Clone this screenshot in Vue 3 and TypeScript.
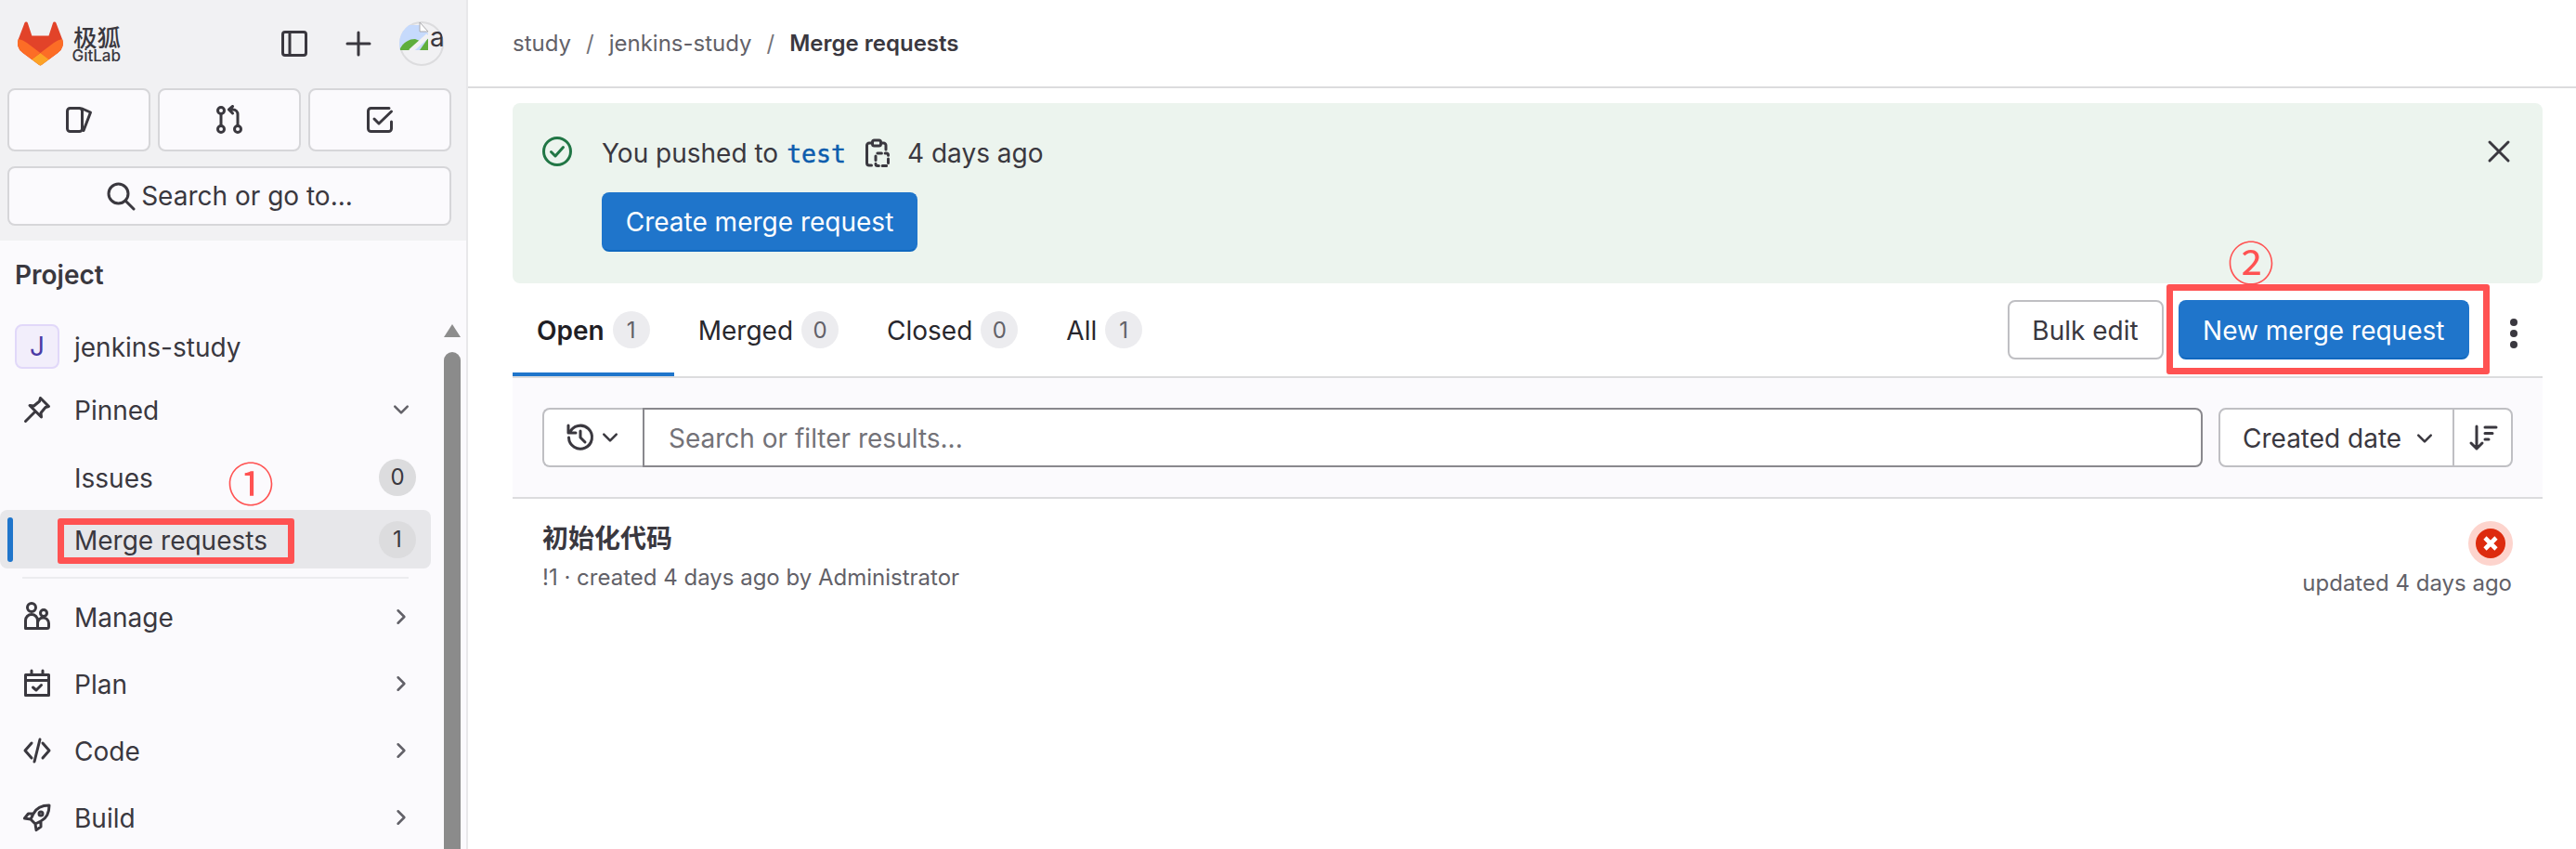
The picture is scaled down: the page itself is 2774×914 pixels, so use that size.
<script setup lang="ts">
interface NavItem { label: string; d: string }
const navItems: NavItem[] = [
  { label: 'Manage', d: 'M1.75 14.25V10a3.25 3.25 0 0 1 6.5 0v4.25zM8.25 14.25h5a1 1 0 0 0 1-1V11.5a3 3 0 0 0-6 0M7.25 3a2.25 2.25 0 1 1-4.5 0 2.25 2.25 0 0 1 4.5 0zM13.25 6a1.75 1.75 0 1 1-3.5 0 1.75 1.75 0 0 1 3.5 0z' },
  { label: 'Plan', d: 'M1.75 3.25h12.5v11H1.75zM1.75 6.25h12.5M5 1v2.25M11 1v2.25M5.75 10l1.75 1.5 2.75-2.75' },
  { label: 'Code', d: 'M5 4 1.5 8 5 12M11 4l3.5 4-3.5 4M9.5 2l-3 12' },
  { label: 'Build', d: 'M14.5 1.5c-4 0-7 1.5-8.5 4.5L4.5 9 7 11.5l3-1.5c3-1.5 4.5-4.5 4.5-8.5zM6 6H3.2L1.2 8.5l3.3.5M10 10v3l-2.5 1.8-.5-3.3M11 6a1 1 0 1 1-2 0 1 1 0 0 1 2 0z' },
]
const tabs = [
  { label: 'Open', count: 1, active: true },
  { label: 'Merged', count: 0, active: false },
  { label: 'Closed', count: 0, active: false },
  { label: 'All', count: 1, active: false },
]
</script>

<template>
  <div class="page">
    <aside class="sidebar">
      <div class="super">
        <div class="topbar">
          <svg class="logo" viewBox="0 0 25 24" width="49" height="48">
            <path d="m24.507 9.5-.034-.09L21.082.562a.896.896 0 0 0-1.694.091l-2.29 7.01H7.825L5.535.653a.898.898 0 0 0-1.694-.09L.451 9.411.416 9.5a6.297 6.297 0 0 0 2.09 7.278l.012.01.03.022 5.16 3.867 2.56 1.935 1.554 1.176a1.051 1.051 0 0 0 1.268 0l1.555-1.176 2.56-1.935 5.197-3.89.014-.01A6.297 6.297 0 0 0 24.507 9.5Z" fill="#E24329"/>
            <path d="m24.507 9.5-.034-.09a11.44 11.44 0 0 0-4.56 2.051l-7.447 5.632 4.742 3.584 5.197-3.89.014-.01A6.297 6.297 0 0 0 24.507 9.5Z" fill="#FC6D26"/>
            <path d="m7.707 20.677 2.56 1.935 1.555 1.176a1.051 1.051 0 0 0 1.268 0l1.555-1.176 2.56-1.935-4.743-3.584-4.755 3.584Z" fill="#FCA326"/>
            <path d="M5.01 11.461a11.43 11.43 0 0 0-4.56-2.05L.416 9.5a6.297 6.297 0 0 0 2.09 7.278l.012.01.03.022 5.16 3.867 4.745-3.584-7.444-5.632Z" fill="#FC6D26"/>
          </svg>
          <div class="brand">
            <span class="brand-cn">极狐</span>
            <span class="brand-en">GitLab</span>
          </div>
          <svg class="ico panel-ico" viewBox="0 0 16 16"><rect x="1.75" y="1.75" width="12.5" height="12.5" rx="1.25"/><path d="M5.5 1.75v12.5"/></svg>
          <svg class="ico plus-ico" viewBox="0 0 16 16"><path d="M8 2v12M2 8h12"/></svg>
          <div class="avatar">
            <svg class="broken" viewBox="0 0 32 32" width="32" height="32">
              <path d="M0 31V4h22l9 9v18z" fill="#c6dafc"/>
              <path d="M0 31c4-9 11-12 17-12l5 2-9 10z" fill="#5fae3c"/>
              <path d="M31 18v13h-9z" fill="#5fae3c"/>
              <path d="M12 32 31 15" stroke="#f1f1f3" stroke-width="5" fill="none"/>
              <path d="M22 1v10h9L22 1z" fill="#fff" stroke="#a9a9ad" stroke-width="1"/>
            </svg>
            <span class="avatar-alt">a</span>
          </div>
        </div>
        <div class="quick">
          <button class="quick-btn"><svg class="ico" viewBox="0 0 16 16"><rect x="1.75" y="1.75" width="8" height="12.5" rx="1.5"/><path d="M9.75 2l4.5 2-3.75 9.75"/></svg></button>
          <button class="quick-btn"><svg class="ico" viewBox="0 0 16 16"><circle cx="3.5" cy="3" r="1.75"/><circle cx="3.5" cy="13" r="1.75"/><circle cx="12.5" cy="13" r="1.75"/><path d="M3.5 4.75v6.5M12.5 11.25V5a2.5 2.5 0 0 0-2.5-2.5H8M9.75.75 7.75 2.5l2 2"/></svg></button>
          <button class="quick-btn"><svg class="ico" viewBox="0 0 16 16"><path d="M13 1.75H3.25a1.5 1.5 0 0 0-1.5 1.5v9.5a1.5 1.5 0 0 0 1.5 1.5h9.5a1.5 1.5 0 0 0 1.5-1.5V9M5 7.5 7.5 10l6.75-6.5"/></svg></button>
        </div>
        <button class="search-btn">
          <svg class="ico" viewBox="0 0 16 16"><circle cx="6.75" cy="6.75" r="5.25"/><path d="M10.5 10.5 15 15"/></svg>
          <span>Search or go to...</span>
        </button>
      </div>

      <div class="ctx-title">Project</div>

      <div class="nav-wrap">
        <nav class="nav">
          <div class="nav-row project-row">
            <span class="proj-avatar">J</span>
            <span class="label">jenkins-study</span>
          </div>
          <div class="nav-row pinned-row">
            <svg class="ico" viewBox="0 0 16 16"><path d="M9.75 1.75l4.5 4.5-1.75.5-2.5 3 .25 2.25L4 5.75l2.25.25 3-2.5zM6.5 9.5l-4.75 4.75"/></svg>
            <span class="label">Pinned</span>
            <svg class="chev" viewBox="0 0 16 16"><path d="M3.5 5.75 8 10.25l4.5-4.5"/></svg>
          </div>
          <div class="nav-row sub-row">
            <span class="label sub-label">Issues</span>
            <span class="nav-badge">0</span>
          </div>
          <div class="nav-row sub-row active-row">
            <span class="active-bar"></span>
            <span class="label sub-label">Merge requests</span>
            <span class="nav-badge">1</span>
          </div>
          <div class="sep"></div>
          <div v-for="item in navItems" :key="item.label" class="nav-row group-row">
            <svg class="ico" viewBox="0 0 16 16"><path :d="item.d"/></svg>
            <span class="label">{{ item.label }}</span>
            <svg class="chev" viewBox="0 0 16 16"><path d="M5.75 3.5 10.25 8l-4.5 4.5"/></svg>
          </div>
        </nav>
        <div class="scrollbar">
          <span class="scroll-up"></span>
          <span class="scroll-thumb"></span>
        </div>
      </div>
    </aside>

    <main class="main">
      <header class="crumbs">
        <span class="crumb">study</span><span class="slash">/</span>
        <span class="crumb">jenkins-study</span><span class="slash">/</span>
        <span class="crumb current">Merge requests</span>
      </header>

      <section class="alert">
        <svg class="ico alert-check" viewBox="0 0 16 16"><circle cx="8" cy="8" r="7.25"/><path d="M4.75 8.25 7 10.5l4.25-4.75"/></svg>
        <div class="alert-body">
          <div class="alert-text">
            <span>You pushed to</span>
            <code class="branch">test</code>
            <svg class="ico clip" viewBox="0 0 16 16"><path d="M5.5 2.5H4a1.25 1.25 0 0 0-1.25 1.25v9.5A1.25 1.25 0 0 0 4 14.5h1.25M10.5 2.5h1.25A1.25 1.25 0 0 1 13 3.75V6"/><rect x="5.75" y="1" width="4.5" height="3" rx="1"/><rect x="7.5" y="8" width="6.75" height="6.75" rx="1" stroke-dasharray="2.2 1.9"/></svg>
            <span>4 days ago</span>
          </div>
          <button class="btn primary create">Create merge request</button>
        </div>
        <svg class="ico close" viewBox="0 0 16 16"><path d="M3 3l10 10M13 3 3 13"/></svg>
      </section>

      <div class="tabs-row">
        <div class="tabs">
          <div v-for="t in tabs" :key="t.label" class="tab" :class="{ on: t.active }">
            <span class="tab-text">{{ t.label }}</span>
            <span class="tab-badge">{{ t.count }}</span>
          </div>
        </div>
        <div class="actions">
          <button class="btn outline">Bulk edit</button>
          <button class="btn primary newmr">New merge request</button>
          <span class="kebab"><i></i><i></i><i></i></span>
        </div>
      </div>

      <div class="filter">
        <button class="history">
          <svg class="ico" viewBox="0 0 16 16"><path d="M2.2 5.5A6.25 6.25 0 1 1 1.75 8M1.5 1.5v4h4M8 4.5V8l2.5 2.5"/></svg>
          <svg class="chev small" viewBox="0 0 16 16"><path d="M3.5 5.75 8 10.25l4.5-4.5"/></svg>
        </button>
        <div class="filter-input">Search or filter results...</div>
        <div class="sorter">
          <div class="sort-field">
            <span>Created date</span>
            <svg class="chev" viewBox="0 0 16 16"><path d="M3.5 5.75 8 10.25l4.5-4.5"/></svg>
          </div>
          <div class="sort-dir">
            <svg class="ico" viewBox="0 0 16 16"><path d="M4.5 2v12M1.5 11l3 3 3-3M9 2.5h6M9 5.75h4M9 9h2"/></svg>
          </div>
        </div>
      </div>

      <div class="mr">
        <div class="mr-left">
          <div class="mr-title">初始化代码</div>
          <div class="mr-meta">!1 · created 4 days ago by Administrator</div>
        </div>
        <div class="mr-right">
          <span class="status">
            <svg viewBox="0 0 32 32" width="32" height="32"><circle cx="16" cy="16" r="16" fill="#dd2b0e"/><path d="M10 10l12 12M22 10 10 22" stroke="#fff" stroke-width="4.6" fill="none"/></svg>
          </span>
          <div class="mr-updated">updated 4 days ago</div>
        </div>
      </div>
    </main>

    <span class="mark-box box-one"></span>
    <span class="mark-box box-two"></span>
    <span class="mark-num num-one">①</span>
    <span class="mark-num num-two">②</span>
  </div>
</template>

<style>
html, body { margin: 0; background: #fff; overflow: hidden; }
</style>

<style scoped>
.page {
  position: relative;
  display: flex;
  width: 2774px;
  height: 914px;
  overflow: hidden;
  background: #fff;
  font-family: Inter, "Noto Sans CJK SC", sans-serif;
  font-size: 28px;
  color: #3a383f;
}
button { font: inherit; color: inherit; cursor: pointer; }
.ico { width: 32px; height: 32px; flex: none; fill: none; stroke: #3a383f; stroke-width: 1.5; stroke-linecap: round; stroke-linejoin: round; }
.chev { width: 24px; height: 24px; flex: none; fill: none; stroke: #626168; stroke-width: 1.7; stroke-linecap: round; stroke-linejoin: round; }

.sidebar { width: 502px; flex: none; background: #fbfafd; border-right: 2px solid #e8e8ea; display: flex; flex-direction: column; overflow: hidden; }
.super { height: 259px; background: #f1f1f3; padding: 23px 16px 0 8px; box-sizing: border-box; }
.topbar { display: flex; align-items: center; height: 48px; padding-left: 11px; }
.brand { display: flex; flex-direction: column; align-items: flex-end; width: 52px; height: 44px; margin-left: 10px; color: #3a383f; }
.brand-cn { font-family: "Noto Sans CJK SC", sans-serif; font-size: 25.5px; line-height: 27px; font-weight: 500; height: 27px; }
.brand-en { font-size: 17px; line-height: 17px; font-weight: 500; height: 17px; }
.panel-ico { margin-left: 171px; }
.plus-ico { margin-left: 37px; }
.avatar { position: relative; width: 48px; height: 48px; margin-left: 28px; border-radius: 50%; box-shadow: inset 0 0 0 2px #dcdcde; overflow: hidden; flex: none; }
.broken { position: absolute; left: 0; top: 0; }
.avatar-alt { position: absolute; left: 33px; top: -1px; font-size: 28px; line-height: 36px; color: #3a383f; }
.quick { display: grid; grid-template-columns: repeat(3, 154px); gap: 8px; margin-top: 24px; }
.quick-btn { height: 68px; background: #fbfafd; border: 2px solid #d6d6d9; border-radius: 8px; display: flex; align-items: center; justify-content: center; padding: 0; }
.search-btn { display: flex; align-items: center; justify-content: center; gap: 6px; width: 478px; height: 64px; margin-top: 16px; background: #fbfafd; border: 2px solid #d6d6d9; border-radius: 8px; padding: 0; }

.ctx-title { font-weight: 600; line-height: 34px; padding: 20px 0 0 16px; height: 70px; box-sizing: border-box; color: #3a383f; }
.nav-wrap { display: flex; flex: 1; min-height: 0; padding-top: 20px; }
.nav { width: 464px; flex: none; display: flex; flex-direction: column; }
.nav-row { position: relative; display: flex; align-items: center; flex: none; height: 63px; padding: 0 20px 0 24px; box-sizing: border-box; }
.label { margin-left: 24px; padding-top: 2px; }
.project-row { padding-left: 16px; height: 48px; }
.project-row .label { margin-left: 16px; }
.proj-avatar { width: 48px; height: 48px; box-sizing: border-box; border: 2px solid #e1d8f9; border-radius: 8px; background: #f2eefb; color: #4b3aa5; display: flex; align-items: center; justify-content: center; }
.pinned-row { margin-top: 12px; }
.pinned-row .chev, .group-row .chev { margin-left: auto; }
.sub-row { padding-left: 80px; padding-right: 16px; }
.sub-label { margin-left: 0; }
.sub-row:nth-child(3) { margin-top: 10px; }
.active-row { margin-top: 4px; background: #e7e7ea; border-radius: 8px; }
.active-bar { position: absolute; left: 8px; top: 8px; width: 6px; height: 48px; border-radius: 3px; background: #1f75cb; }
.nav-badge { margin-left: auto; width: 40px; height: 40px; border-radius: 50%; background: #dcdcde; display: flex; align-items: center; justify-content: center; font-size: 24px; color: #3a383f; }
.sep { height: 2px; margin: 9px 24px 9px; background: #ececef; flex: none; }
.group-row { margin-bottom: 9px; }
.scrollbar { width: 18px; margin-left: 14px; display: flex; flex-direction: column; align-items: center; flex: none; }
.scroll-up { width: 0; height: 0; border-left: 9px solid transparent; border-right: 9px solid transparent; border-bottom: 14px solid #8d8d8d; }
.scroll-thumb { width: 18px; flex: 1; margin-top: 16px; background: #8b8b8b; border-radius: 9px 9px 0 0; }

.main { flex: 1; min-width: 0; padding: 0 36px 0 48px; display: flex; flex-direction: column; }
.crumbs { height: 95px; margin: 0 -36px 0 -48px; padding: 0 0 0 48px; border-bottom: 2px solid #dcdcde; box-sizing: border-box; display: flex; align-items: center; font-size: 24px; color: #626168; flex: none; }
.slash { margin: 0 16px; color: #737278; }
.current { font-weight: 600; color: #3a383f; }

.alert { position: relative; margin-top: 16px; height: 194px; box-sizing: border-box; background: #ecf4ee; border-radius: 8px; padding: 34px 0 0 32px; display: flex; flex: none; }
.alert-check { stroke: #217645; margin-top: 2px; }
.alert-body { margin-left: 32px; display: flex; flex-direction: column; align-items: flex-start; }
.alert-text { display: flex; align-items: center; height: 40px; }
.branch { font-family: "DejaVu Sans Mono", monospace; font-size: 26.5px; color: #0b5cad; margin-left: 9px; -webkit-text-stroke: 0.5px #0b5cad; }
.clip { margin: 0 17px 0 17px; }
.close { position: absolute; right: 31px; top: 36px; }
.btn { height: 64px; border-radius: 8px; padding: 0; box-sizing: border-box; display: flex; align-items: center; justify-content: center; }
.primary { background: #1f75cb; color: #fff; border: 2px solid #1f75cb; border-bottom-color: #1068bf; }
.create { width: 340px; margin-top: 22px; }

.tabs-row { display: flex; align-items: flex-start; height: 102px; border-bottom: 2px solid #dcdcde; box-sizing: border-box; flex: none; }
.tabs { display: flex; height: 100px; }
.tab { display: flex; align-items: center; padding: 4px 26px 0; gap: 9px; color: #28272d; border-bottom: 4px solid transparent; height: 92px; }
.tab-text { padding-top: 2px; }
.tab.on { font-weight: 600; border-bottom-color: #1f75cb; color: #1f1e24; }
.tab-badge { width: 40px; height: 40px; border-radius: 50%; background: #ececef; color: #626168; display: flex; align-items: center; justify-content: center; font-size: 24px; font-weight: 400; }
.actions { margin-left: auto; display: flex; align-items: flex-start; padding-top: 18px; }
.outline { width: 168px; background: #fff; border: 2px solid #bfbfc3; padding-top: 2px; }
.newmr { width: 313.5px; margin-left: 16px; padding-top: 2px; }
.kebab { width: 8px; display: flex; flex-direction: column; gap: 4px; margin: 20px 27px 0 44px; }
.kebab i { width: 8px; height: 8px; border-radius: 50%; background: #3a383f; }

.filter { height: 130px; box-sizing: border-box; border-bottom: 2px solid #dcdcde; background: #fbfafd; padding: 32px 32px 0; display: flex; flex: none; }
.history { width: 108px; height: 64px; box-sizing: border-box; background: #fff; border: 2px solid #bfbfc3; border-right: 0; border-radius: 8px 0 0 8px; display: flex; align-items: center; justify-content: center; padding: 0; gap: 4px; }
.chev.small { stroke: #3a383f; }
.filter-input { flex: 1; height: 64px; box-sizing: border-box; background: #fff; border: 2px solid #89888d; border-radius: 0 8px 8px 0; display: flex; align-items: center; padding: 2px 0 0 26px; color: #737278; }
.sorter { display: flex; margin-left: 17px; width: 317px; height: 64px; box-sizing: border-box; background: #fff; border: 2px solid #bfbfc3; border-radius: 8px; flex: none; }
.sort-field { flex: 1; display: flex; align-items: center; padding: 2px 0 0 24px; gap: 13px; border-right: 2px solid #bfbfc3; }
.sort-field .chev { stroke: #3a383f; }
.sort-dir { width: 61px; display: flex; align-items: center; justify-content: center; }

.mr { display: flex; justify-content: space-between; padding: 21px 33px 0 32px; }
.mr-title { font-family: "Noto Sans CJK SC", sans-serif; font-weight: 700; font-size: 28px; line-height: 40px; color: #3a383f; }
.mr-meta { font-size: 24px; line-height: 36px; color: #626168; margin-top: 6px; }
.mr-right { display: flex; flex-direction: column; align-items: flex-end; margin-top: 3px; }
.status { width: 48px; height: 48px; border-radius: 50%; background: #fdd4cd; display: flex; align-items: center; justify-content: center; margin-right: -1px; }
.mr-updated { font-size: 24px; line-height: 36px; color: #626168; margin-top: 1px; }

.mark-box { position: absolute; box-sizing: border-box; border: 7.5px solid #ff5252; border-radius: 3px; }
.box-one { left: 62px; top: 558px; width: 255px; height: 49px; }
.box-two { left: 2333px; top: 306px; width: 348px; height: 97px; }
.mark-num { position: absolute; font-family: "Noto Sans CJK SC", sans-serif; font-weight: 400; font-size: 50px; line-height: 50px; width: 50px; text-align: center; color: #ff5252; }
.num-one { left: 245px; top: 493px; }
.num-two { left: 2399px; top: 255px; }
</style>
